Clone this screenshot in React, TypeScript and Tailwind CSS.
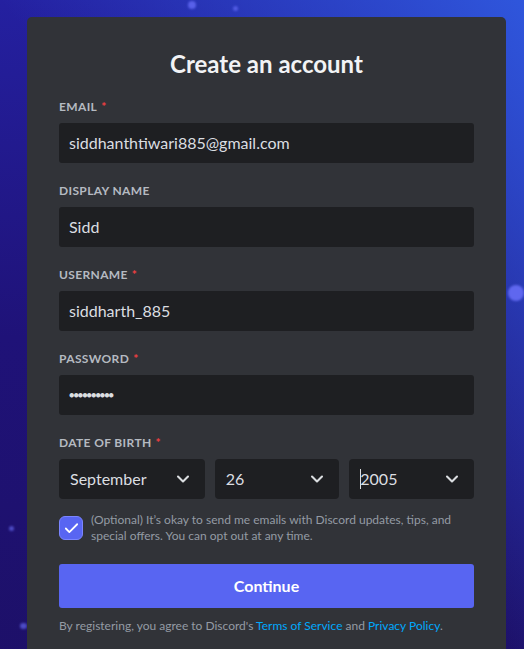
import React from 'react';
import { ChevronDown, Check } from 'lucide-react';

const font = { fontFamily: 'Lato, "Noto Sans", sans-serif' };

interface FieldProps {
  label: string;
  required?: boolean;
  children: React.ReactNode;
}

const Field: React.FC<FieldProps> = ({ label, required = false, children }) => (
  <div className="mb-5">
    <div className="mb-2 flex h-4 items-center text-[12px] font-bold uppercase tracking-[0.03em] text-[#b5bac1]">
      {label}
      {required && <span className="pl-1 text-[#f23f42]">*</span>}
    </div>
    {children}
  </div>
);

const TextBox: React.FC<{ value: string; small?: boolean }> = ({ value, small = false }) => (
  <div className="flex h-10 items-center rounded-[3px] bg-[#1e1f22] px-[10px] text-[16px] text-[#dbdee1]">
    <span className={small ? 'text-[9px] tracking-[-1px]' : ''}>{value}</span>
  </div>
);

const SelectBox: React.FC<{ value: string; width: string; caret?: boolean }> = ({ value, width, caret = false }) => (
  <div className={`flex h-10 items-center justify-between rounded-[4px] bg-[#1e1f22] pl-[11px] pr-[12px] text-[16px] text-[#dbdee1] ${width}`}>
    <span className="flex items-center">
      {caret && <span className="mr-[-1px] h-5 w-px bg-[#dbdee1]" />}
      {value}
    </span>
    <ChevronDown size={20} strokeWidth={2.5} className="text-[#dbdee1]" />
  </div>
);

const Sparkle: React.FC<{ className: string }> = ({ className }) => (
  <div className={`absolute rounded-full bg-[#6d73ff] blur-[1px] ${className}`} />
);

export default function App() {
  return (
    <div
      className="relative min-h-[649px] w-full overflow-hidden bg-gradient-to-b from-[#2420a0] via-[#1f1278] to-[#1d1068]"
      style={font}
    >
      <div className="absolute inset-0 bg-gradient-to-bl from-[#2f56dc] via-transparent to-transparent" />
      <Sparkle className="left-[188px] top-[1px] h-2 w-2 opacity-70" />
      <Sparkle className="left-[233px] top-[6px] h-[5px] w-[5px] opacity-60" />
      <Sparkle className="left-[508px] top-[285px] h-4 w-4 opacity-80" />
      <Sparkle className="left-[9px] top-[526px] h-[5px] w-[5px] opacity-60" />
      <Sparkle className="left-[20px] top-[623px] h-[6px] w-[7px] opacity-60" />

      <div className="relative pl-[27px] pr-[18px] pt-[17px]">
        <div className="w-[479px] rounded-[5px] bg-[#313338] px-8 pb-10 pt-8">
          <h1 className="mb-5 h-[30px] text-center text-[24px] font-bold leading-[30px] text-[#f2f3f5]">
            Create an account
          </h1>

          <Field label="Email" required>
            <TextBox value="siddhanthtiwari885@gmail.com" />
          </Field>
          <Field label="Display Name">
            <TextBox value="Sidd" />
          </Field>
          <Field label="Username" required>
            <TextBox value="siddharth_885" />
          </Field>
          <Field label="Password" required>
            <TextBox value="●●●●●●●●●●" small />
          </Field>

          <Field label="Date of Birth" required>
            <div className="flex gap-[10px]">
              <SelectBox value="September" width="w-[146px]" />
              <SelectBox value="26" width="w-[125px]" />
              <SelectBox value="2005" width="w-[125px]" caret />
            </div>
          </Field>

          <div className="-mt-[7px] flex items-center gap-2">
            <div className="flex h-6 w-6 shrink-0 items-center justify-center rounded-[6px] border border-[#7b85ff] bg-[#5865f2]">
              <Check size={17} strokeWidth={2.5} className="text-white" />
            </div>
            <p className="pr-[10px] text-[12px] leading-4 text-[#949ba4]">
              (Optional) It’s okay to send me emails with Discord updates, tips, and special offers. You can opt out at any time.
            </p>
          </div>

          <button className="mt-5 flex h-[44px] w-full items-center justify-center rounded-[3px] bg-[#5865f2] text-[16px] font-bold text-white">
            Continue
          </button>

          <p className="mt-[10px] text-[12px] leading-4 text-[#949ba4]">
            By registering, you agree to Discord's <span className="text-[#00a8fc]">Terms of Service</span> and{' '}
            <span className="text-[#00a8fc]">Privacy Policy</span>.
          </p>
        </div>
      </div>
    </div>
  );
}
